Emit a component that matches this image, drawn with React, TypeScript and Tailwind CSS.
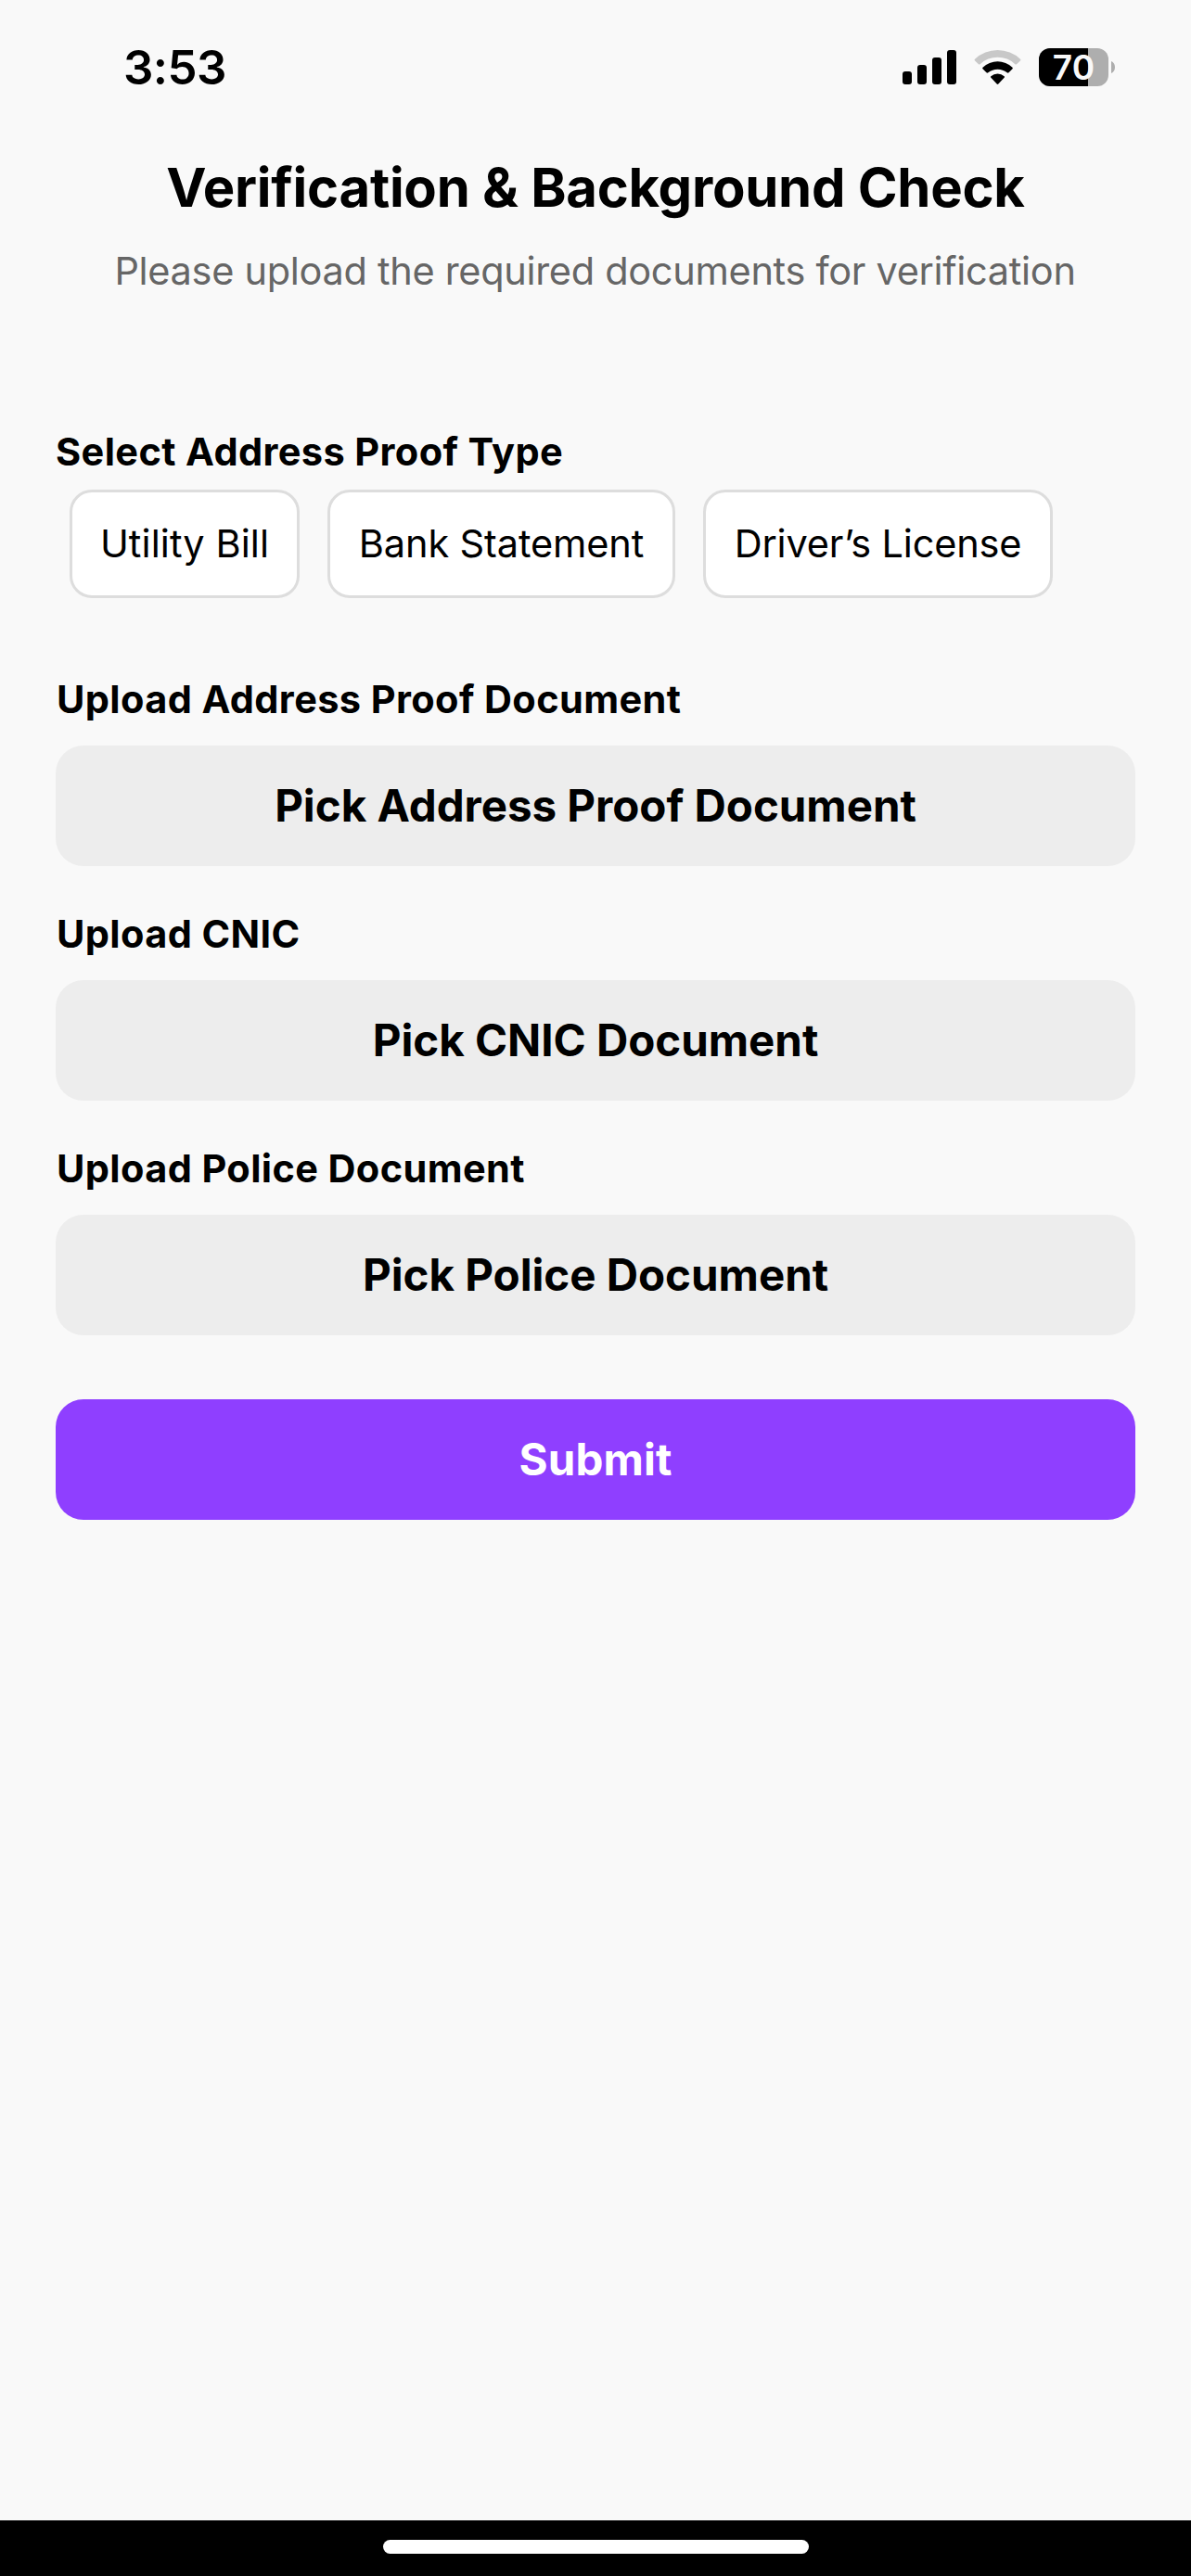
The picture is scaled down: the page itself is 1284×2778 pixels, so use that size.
import { useState } from "react";

function SignalIcon() {
  return (
    <svg className="h-[41px] w-[58px]" viewBox="99 66 174 123" fill="#000" aria-label="Signal">
      <rect x="99" y="141" width="30" height="42" rx="9" />
      <rect x="147" y="120" width="30" height="63" rx="9" />
      <rect x="195" y="96" width="30" height="87" rx="9" />
      <rect x="243" y="72" width="30" height="111" rx="9" />
    </svg>
  );
}

function WifiIcon() {
  return (
    <svg className="h-[41px] w-[52px]" viewBox="330 66 156 123" fill="#000" aria-label="Wi-Fi">
      <path
        fill="#c8c8c8"
        d="M332.500 106Q330.500 103.500 333 101A107.600 107.600 0 0 1 480 101Q482.500 103.500 480.500 106L468 117.500Q465.500 119.500 463 117.500A82 82 0 0 0 350 117.500Q347.500 119.500 345 117.500Z"
      />
      <path d="M358.500 133Q356 130.500 358.500 128A70 70 0 0 1 454.500 128Q457 130.500 454.500 133L442.500 145Q440 147 437 145A48 48 0 0 0 376 145Q373 147 370.500 145Z" />
      <path d="M385 161.500Q382.500 159 385 156.500A32 32 0 0 1 428 156.500Q430.500 159 428 161.500L409 181.500Q406.500 184 404 181.500Z" />
    </svg>
  );
}

function Battery({ level }: { level: number }) {
  return (
    <div className="flex items-center gap-[3px]">
      <div className="relative flex h-[41px] w-[75px] items-center justify-center rounded-[12px] bg-[#aeaeae]">
        <div
          className="absolute inset-y-0 left-0 rounded-l-[12px] bg-black"
          style={{ width: `${level + 0.67}%` }}
        />
        <span className="relative text-[37px] leading-[41px] font-semibold tracking-[0.2px] text-[#f9f9f9]">
          {level}
        </span>
      </div>
      <svg className="h-[13px] w-[4px]" viewBox="0 0 4 13" fill="#aeaeae">
        <path d="M0 0C2.500 1 4 3.500 4 6.500S2.500 12 0 13Z" />
      </svg>
    </div>
  );
}

const proofTypes = [
  { name: "Utility Bill", className: "w-[248px] tracking-[0.07px]" },
  { name: "Bank Statement", className: "w-[375px] tracking-[-0.12px]" },
  { name: "Driver’s License", className: "w-[377px] tracking-[-0.19px]" },
];

const uploads = [
  { label: "Upload Address Proof Document", action: "Pick Address Proof Document" },
  { label: "Upload CNIC", action: "Pick CNIC Document" },
  { label: "Upload Police Document", action: "Pick Police Document" },
];

export default function App() {
  const [selected, setSelected] = useState<string | null>(null);

  return (
    <div className="flex h-[2778px] w-[1284px] flex-col overflow-hidden bg-[#f9f9f9] font-['Inter',sans-serif] text-black [font-variant-ligatures:none]">
      <header className="flex h-[146px] items-start justify-between pr-[82px] pl-[133px]">
        <span className="text-[51px] leading-[146px] font-semibold tracking-[-0.6px]">3:53</span>
        <div className="flex pt-[52px]">
          <SignalIcon />
          <div className="mr-[18px] ml-[19px]">
            <WifiIcon />
          </div>
          <Battery level={70} />
        </div>
      </header>

      <main className="flex flex-1 flex-col px-[60px] pt-[20px]">
        <h1 className="text-center text-[58px] leading-[72px] font-bold tracking-[-0.265px] whitespace-nowrap">
          Verification &amp; Background Check
        </h1>
        <p className="mt-[29px] pr-[1px] text-center text-[41.5px] leading-[50px] tracking-[-0.313px] whitespace-nowrap text-[#666]">
          Please upload the required documents for verification
        </p>

        <h2 className="mt-[145px] text-[41.5px] leading-[50px] font-bold tracking-[0.38px]">
          Select Address Proof Type
        </h2>
        <div className="mt-4 mb-[84px] ml-[15px] flex gap-[30px]">
          {proofTypes.map(({ name, className }) => (
            <button
              key={name}
              type="button"
              aria-pressed={selected === name}
              onClick={() => setSelected(name)}
              className={`h-[117px] rounded-[24px] border-[3px] border-[#ddd] bg-white pb-[1px] text-[41.5px] leading-[50px] whitespace-nowrap ${className}`}
            >
              {name}
            </button>
          ))}
        </div>

        <div className="flex flex-col gap-[48px]">
          {uploads.map(({ label, action }) => (
            <section key={label} className="flex flex-col gap-[25px]">
              <h2 className="pl-[1px] text-[41.5px] leading-[50px] font-bold tracking-[0.38px]">{label}</h2>
              <button
                type="button"
                className="h-[130px] rounded-[30px] bg-[#ededed] text-[47.5px] leading-[58px] font-bold tracking-[-0.03px]"
              >
                {action}
              </button>
            </section>
          ))}
        </div>

        <button
          type="button"
          className="mt-[69px] h-[130px] rounded-[30px] bg-[#8f3fff] text-[47.5px] leading-[58px] font-bold tracking-[0.13px] text-white"
        >
          Submit
        </button>
      </main>

      <footer className="flex h-[60px] justify-center bg-black pt-[21px]">
        <div className="h-[15px] w-[459px] rounded-full bg-white" />
      </footer>
    </div>
  );
}
